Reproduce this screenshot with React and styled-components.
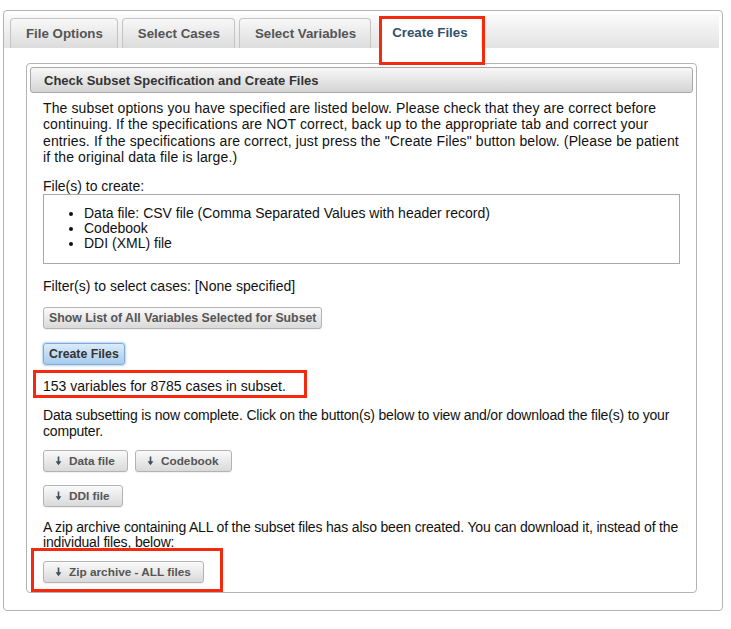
import React from "react";
import styled, { createGlobalStyle, css } from "styled-components";

const Global = createGlobalStyle`
  html, body { margin: 0; padding: 0; background: #fff; }
  body { font-family: "Liberation Sans", Arial, Helvetica, sans-serif; color: #111; }
`;

const Page = styled.div`
  padding: 10px 0 0 3px;
`;

const Outer = styled.div`
  width: 720px;
  box-sizing: border-box;
  border: 1px solid #b4b4b4;
  border-radius: 4px;
  padding: 3px 3px 17px 0;
  background: #fff;
`;

const TabBar = styled.div`
  display: flex;
  gap: 4px;
  align-items: flex-end;
  height: 34px;
  box-sizing: border-box;
  padding: 0 0 0 6px;
  background: linear-gradient(#fbfbfb, #e3e3e3);
`;

const Tab = styled.div`
  position: relative;
  height: 30px;
  box-sizing: border-box;
  display: flex;
  align-items: center;
  padding: 0 14px 0 15px;
  border: 1px solid #c4c4c4;
  border-bottom: none;
  border-radius: 4px 4px 0 0;
  font-size: 13.3px;
  font-weight: bold;
  color: #555;
  background: linear-gradient(#f8f8f8, #dcdcdc);
  ${(p) =>
    p.$active &&
    css`
      margin-left: 4px;
      padding: 0 12px 2px 12px;
      height: 32px;
      margin-bottom: -1px;
      color: #34506d;
      background: #fff;
      border-color: #fff;
    `}
`;

const Mark = styled.span`
  position: absolute;
  pointer-events: none;
  border: 3px solid #f5290d;
  top: ${(p) => p.$t}px;
  left: ${(p) => p.$l}px;
  right: ${(p) => p.$r}px;
  bottom: ${(p) => p.$b}px;
`;

const Panel = styled.div`
  margin: 15px 22px 0 22px;
  border: 1px solid #b4b4b4;
  border-radius: 4px;
  padding: 3px 3px 9px 3px;
`;

const Header = styled.div`
  height: 26px;
  box-sizing: border-box;
  border: 1px solid #a9a9a9;
  border-radius: 3px;
  background: linear-gradient(#f7f7f7, #d4d4d4);
  display: flex;
  align-items: center;
  padding-left: 13px;
  font-size: 13px;
  font-weight: bold;
  color: #333;
`;

const Content = styled.div`
  padding: 0 13px;
  display: flex;
  flex-direction: column;
  align-items: flex-start;
`;

const Para = styled.p`
  margin: ${(p) => p.$mt || 0}px 0 0 0;
  font-size: 14px;
  line-height: ${(p) => p.$lh || 16}px;
  letter-spacing: ${(p) => p.$ls || 0}px;
  color: #111;
  white-space: nowrap;
`;

const Inline = styled.div`
  position: relative;
  margin-top: ${(p) => p.$mt || 0}px;
  font-size: 14px;
  line-height: 16px;
`;

const FileBox = styled.div`
  align-self: stretch;
  border: 1px solid #a9a9a9;
  font-size: 14px;
  line-height: 15px;
`;

const List = styled.ul`
  margin: 11px 0 12px 0;
  padding-left: 40px;
  list-style: disc;
`;

const Button = styled.button`
  position: relative;
  height: 22px;
  box-sizing: border-box;
  display: inline-flex;
  align-items: center;
  gap: 7px;
  padding: ${(p) => (p.$icon ? "0 12px 0 11px" : "0 5px")};
  border: 1px solid #b3b3b3;
  border-radius: 3px;
  background: linear-gradient(#fafafa, #d9d9d9);
  font-family: "Liberation Sans", Arial, Helvetica, sans-serif;
  font-size: ${(p) => (p.$icon ? 11.8 : 12.3)}px;
  font-weight: bold;
  color: #555;
  box-shadow: 0 1px 1px rgba(0, 0, 0, 0.06);
  ${(p) =>
    p.$primary &&
    css`
      border-color: #80abd6;
      background: linear-gradient(#dcebf8, #a7cbec);
      color: #333;
      box-shadow: 0 0 2px 1px #b9d6f1;
    `}
`;

const Row = styled.div`
  display: flex;
  gap: 7px;
  margin-top: ${(p) => p.$mt || 0}px;
`;

const Slot = styled.div`
  position: relative;
  margin-top: ${(p) => p.$mt || 0}px;
`;

const Arrow = () => (
  <svg width="7" height="10" viewBox="0 0 7 10">
    <path d="M3.5 0.5 V8" stroke="#3f4f5e" strokeWidth="1.6" />
    <path d="M0.6 5.2 L3.5 9.2 L6.4 5.2 Z" fill="#3f4f5e" />
  </svg>
);

export default function App() {
  return (
    <>
      <Global />
      <Page>
        <Outer>
          <TabBar>
            <Tab>File Options</Tab>
            <Tab>Select Cases</Tab>
            <Tab>Select Variables</Tab>
            <Tab $active>
              Create Files
              <Mark $t={-2} $l={-1} $r={-5} $b={-16} />
            </Tab>
          </TabBar>
          <Panel>
            <Header>Check Subset Specification and Create Files</Header>
            <Content>
              <Para $mt={7} $lh={16.3} $ls={0.12}>
                The subset options you have specified are listed below. Please check that they are correct before
                <br />
                continuing. If the specifications are NOT correct, back up to the appropriate tab and correct your
                <br />
                entries. If the specifications are correct, just press the "Create Files" button below. (Please be patient
                <br />
                if the original data file is large.)
              </Para>
              <Para $mt={13}>File(s) to create:</Para>
              <FileBox>
                <List>
                  <li>Data file: CSV file (Comma Separated Values with header record)</li>
                  <li>Codebook</li>
                  <li>DDI (XML) file</li>
                </List>
              </FileBox>
              <Para $mt={14}>Filter(s) to select cases: [None specified]</Para>
              <Slot $mt={13}>
                <Button>Show List of All Variables Selected for Subset</Button>
              </Slot>
              <Slot $mt={14}>
                <Button $primary>Create Files</Button>
              </Slot>
              <Inline $mt={13}>
                153 variables for 8785 cases in subset.
                <Mark $t={-8} $l={-10} $r={-21} $b={-4} />
              </Inline>
              <Para $mt={14} $lh={15.5} $ls={-0.18}>
                Data subsetting is now complete. Click on the button(s) below to view and/or download the file(s) to your
                <br />
                computer.
              </Para>
              <Row $mt={11}>
                <Button $icon>
                  <Arrow />
                  Data file
                </Button>
                <Button $icon>
                  <Arrow />
                  Codebook
                </Button>
              </Row>
              <Row $mt={13}>
                <Button $icon>
                  <Arrow />
                  DDI file
                </Button>
              </Row>
              <Para $mt={13} $lh={14.5} $ls={-0.17}>
                A zip archive containing ALL of the subset files has also been created. You can download it, instead of the
                <br />
                individual files, below:
              </Para>
              <Slot $mt={12}>
                <Button $icon>
                  <Arrow />
                  Zip archive - ALL files
                </Button>
                <Mark $t={-13} $l={-12} $r={-19} $b={-9} />
              </Slot>
            </Content>
          </Panel>
        </Outer>
      </Page>
    </>
  );
}
